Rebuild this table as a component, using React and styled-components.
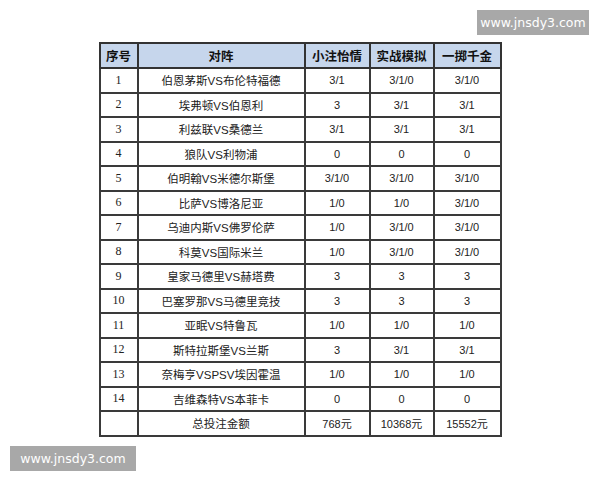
import React from "react";
import styled, { createGlobalStyle } from "styled-components";

const Global = createGlobalStyle`
  html, body { margin: 0; padding: 0; background: #fff; }
  body { font-family: "Liberation Sans", "Noto Sans CJK SC", sans-serif; }
`;

const Page = styled.div`
  position: relative;
  width: 600px;
  height: 480px;
  background: #fff;
  display: flex;
  justify-content: center;
  padding-top: 42px;
  box-sizing: border-box;
`;

const Table = styled.table`
  border-collapse: collapse;
  table-layout: fixed;
  width: 401px;
  height: 393px;
  border: 2px solid #333;
`;

const Col = styled.col`
  width: ${(p) => p.$w}px;
`;

const HeadRow = styled.tr`
  height: 25px;
  background: #c6d6ec;
`;

const Row = styled.tr`
  height: 24.5px;
`;

const Th = styled.th`
  border: 2px solid #333;
  padding: 0;
  font-family: "Noto Sans CJK SC", sans-serif;
  font-size: 12.5px;
  font-weight: 700;
  color: #111;
  text-align: center;
  vertical-align: middle;
`;

const Td = styled.td`
  border: 2px solid #3a3a3a;
  padding: 0;
  font-family: ${(p) =>
    p.$serif
      ? '"Liberation Serif", "Noto Sans CJK SC", serif'
      : '"Liberation Sans", "Noto Sans CJK SC", sans-serif'};
  font-size: ${(p) => (p.$cjk ? 11.5 : p.$serif ? 12 : 11)}px;
  color: #222;
  text-align: center;
  vertical-align: middle;
  white-space: nowrap;
`;

const Watermark = styled.div`
  position: absolute;
  background: #a8a8a8;
  color: #fff;
  font-family: "DejaVu Sans", "Liberation Sans", sans-serif;
  font-size: 12.5px;
  display: flex;
  align-items: center;
  justify-content: center;
  height: 25px;
  width: ${(p) => p.$w}px;
  ${(p) => p.$pos}
`;

const rows = [
  ["1", "伯恩茅斯VS布伦特福德", "3/1", "3/1/0", "3/1/0"],
  ["2", "埃弗顿VS伯恩利", "3", "3/1", "3/1"],
  ["3", "利兹联VS桑德兰", "3/1", "3/1", "3/1"],
  ["4", "狼队VS利物浦", "0", "0", "0"],
  ["5", "伯明翰VS米德尔斯堡", "3/1/0", "3/1/0", "3/1/0"],
  ["6", "比萨VS博洛尼亚", "1/0", "1/0", "3/1/0"],
  ["7", "乌迪内斯VS佛罗伦萨", "1/0", "3/1/0", "3/1/0"],
  ["8", "科莫VS国际米兰", "1/0", "3/1/0", "3/1/0"],
  ["9", "皇家马德里VS赫塔费", "3", "3", "3"],
  ["10", "巴塞罗那VS马德里竞技", "3", "3", "3"],
  ["11", "亚眠VS特鲁瓦", "1/0", "1/0", "1/0"],
  ["12", "斯特拉斯堡VS兰斯", "3", "3/1", "3/1"],
  ["13", "奈梅亨VSPSV埃因霍温", "1/0", "1/0", "1/0"],
  ["14", "吉维森特VS本菲卡", "0", "0", "0"],
];

export default function App() {
  return (
    <>
      <Global />
      <Page>
        <Table>
          <colgroup>
            <Col $w={38} />
            <Col $w={167} />
            <Col $w={65} />
            <Col $w={64} />
            <Col $w={67} />
          </colgroup>
          <thead>
            <HeadRow>
              <Th>序号</Th>
              <Th>对阵</Th>
              <Th>小注怡情</Th>
              <Th>实战模拟</Th>
              <Th>一掷千金</Th>
            </HeadRow>
          </thead>
          <tbody>
            {rows.map((r) => (
              <Row key={r[0]}>
                <Td $serif>{r[0]}</Td>
                <Td $cjk>{r[1]}</Td>
                <Td>{r[2]}</Td>
                <Td>{r[3]}</Td>
                <Td>{r[4]}</Td>
              </Row>
            ))}
            <Row>
              <Td />
              <Td $cjk>总投注金额</Td>
              <Td>768元</Td>
              <Td>10368元</Td>
              <Td>15552元</Td>
            </Row>
          </tbody>
        </Table>
        <Watermark $w={112} $pos="top: 10px; left: 477px;">www.jnsdy3.com</Watermark>
        <Watermark $w={126} $pos="top: 446px; left: 10px;">www.jnsdy3.com</Watermark>
      </Page>
    </>
  );
}
